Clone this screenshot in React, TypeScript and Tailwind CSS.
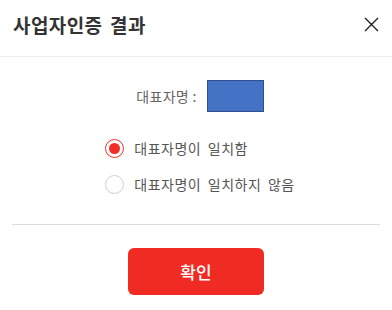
import { useState } from 'react';

const font = { fontFamily: '"Noto Sans CJK KR", "Noto Sans", sans-serif' };

export default function App() {
  const [match, setMatch] = useState(true);

  const options = [
    { value: true, label: '대표자명이 일치함' },
    { value: false, label: '대표자명이 일치하지 않음' },
  ];

  return (
    <div className="w-[392px] h-[310px] bg-white" style={font}>
      {/* Header */}
      <div className="h-[57px] flex items-center justify-between pl-[13px] pr-[13px] border-b border-[#ececec]">
        <h1 className="text-[19px] font-semibold text-[#333] leading-none mb-[7px] tracking-[0.4px] [word-spacing:3px]">사업자인증 결과</h1>
        <button className="w-[16px] h-[16px] flex items-center justify-center mb-[7px]">
          <svg width="15" height="15" viewBox="0 0 15 15" fill="none" stroke="#222" strokeWidth="1.4">
            <path d="M1 1 L14 14 M14 1 L1 14" />
          </svg>
        </button>
      </div>

      {/* Body */}
      <div className="flex flex-col items-center pt-[23px]">
        <div className="flex items-center gap-[10px] pl-[8px]">
          <span className="text-[14px] text-[#666] tracking-[0.3px]">대표자명 :</span>
          <div className="w-[57px] h-[32px] bg-[#4472c4] border border-[#2f528f]" />
        </div>

        <div className="flex flex-col gap-[16px] mt-[26px] pl-[8px]">
          {options.map((opt) => {
            const checked = match === opt.value;
            return (
              <label key={opt.label} className="flex items-center gap-[10px] h-[20px] cursor-pointer" onClick={() => setMatch(opt.value)}>
                <span
                  className={`w-[19px] h-[19px] rounded-full flex items-center justify-center border ${
                    checked ? 'border-[#ef2f2a] border-[1.5px]' : 'border-[#cfcfcf]'
                  }`}
                >
                  {checked && <span className="w-[11px] h-[11px] rounded-full bg-[#ef2f2a]" />}
                </span>
                <span className="text-[14px] text-[#555] tracking-[0.5px] [word-spacing:3px]">{opt.label}</span>
              </label>
            );
          })}
        </div>
      </div>

      <div className="mx-[12px] mt-[30px] border-t border-[#dcdcdc]" />

      <div className="flex justify-center mt-[23px]">
        <button className="w-[136px] h-[47px] rounded-[6px] bg-[#ef2b24] text-white text-[17px] font-medium">
          확인
        </button>
      </div>
    </div>
  );
}
